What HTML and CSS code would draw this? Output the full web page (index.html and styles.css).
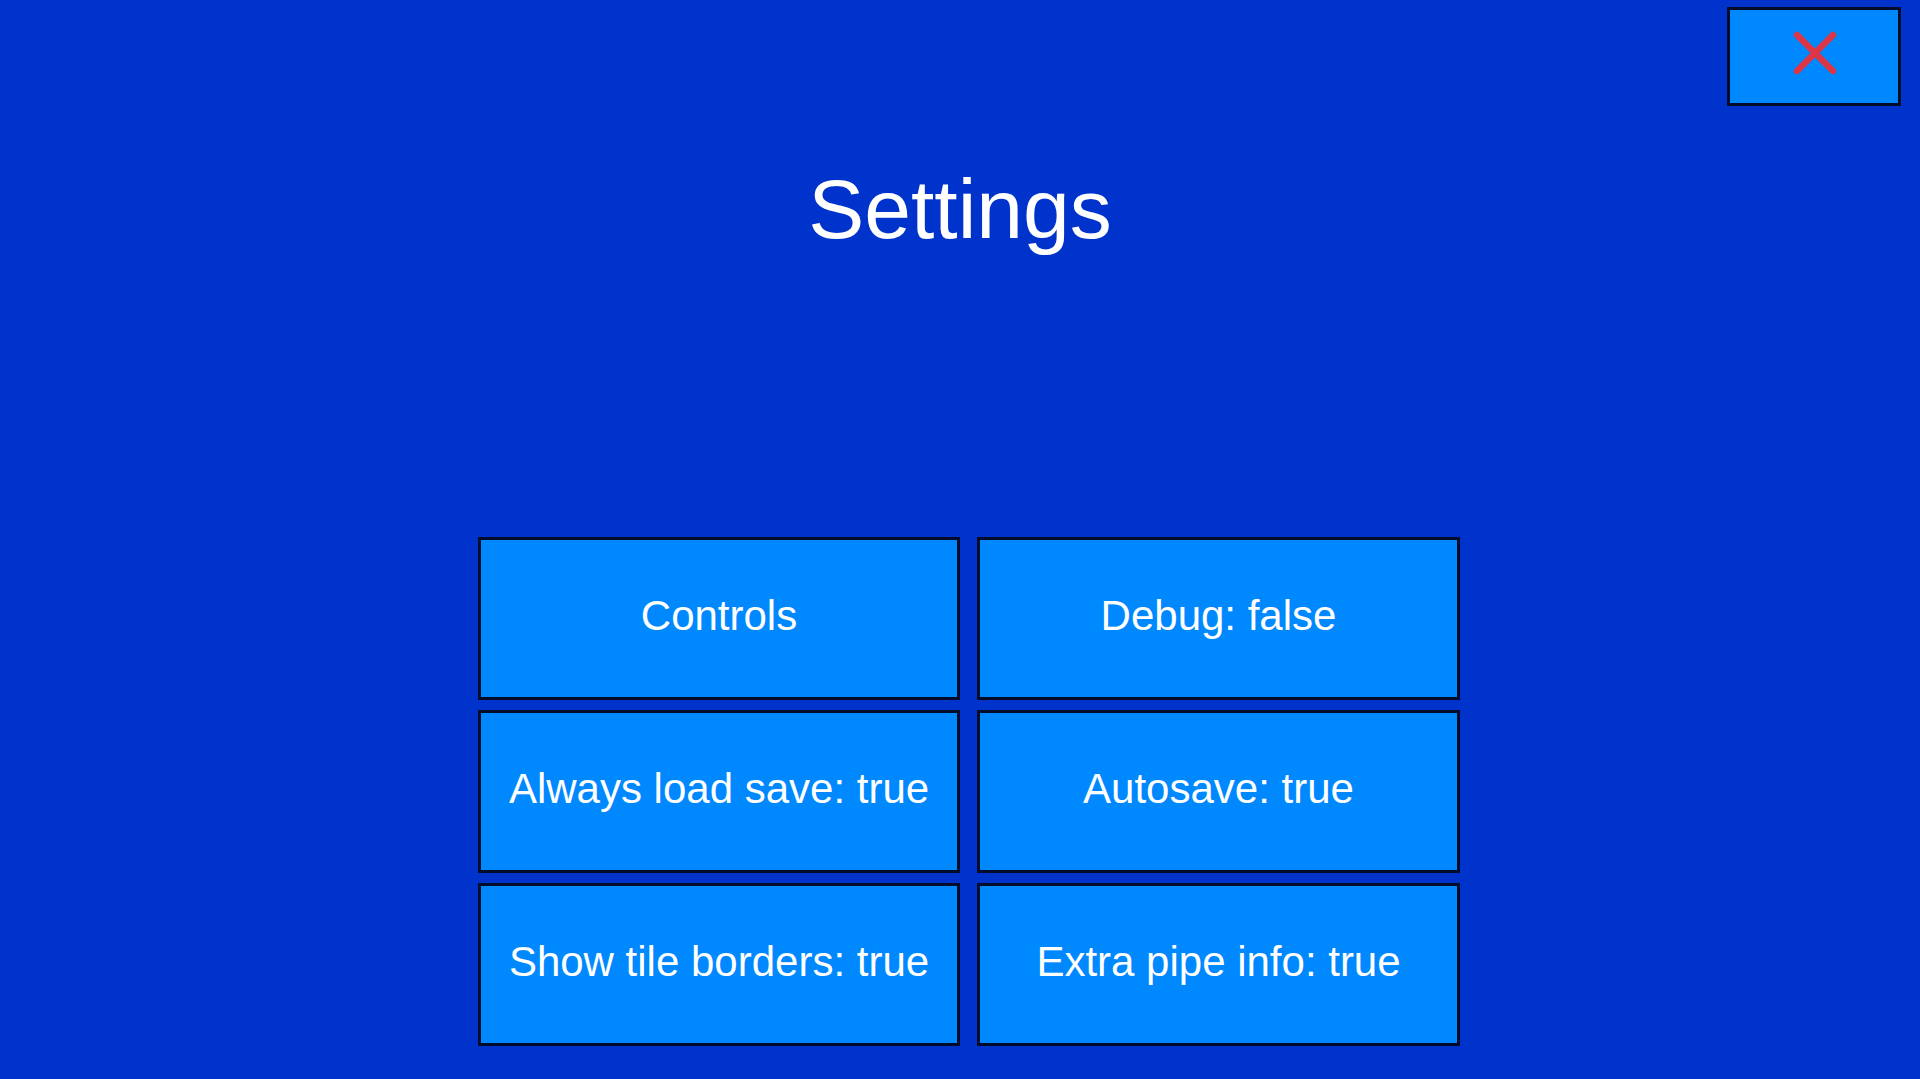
FILE: index.html
```html
<!DOCTYPE html>
<html lang="en">
<head>
<meta charset="utf-8">
<title>Settings</title>
<link rel="stylesheet" href="styles.css">
</head>
<body>
<div class="screen">
  <button class="close-btn" aria-label="Close">
    <svg width="46" height="46" viewBox="0 0 46 46">
      <path d="M5 5 L41 41 M41 5 L5 41" stroke="#dc3545" stroke-width="6.5" stroke-linecap="round" fill="none"/>
    </svg>
  </button>
  <h1 class="title">Settings</h1>
  <div class="options">
    <button class="opt">Controls</button>
    <button class="opt">Debug: false</button>
    <button class="opt">Always load save: true</button>
    <button class="opt">Autosave: true</button>
    <button class="opt">Show tile borders: true</button>
    <button class="opt">Extra pipe info: true</button>
  </div>
</div>
</body>
</html>
```

FILE: styles.css
```css
html, body {
  margin: 0;
  padding: 0;
  width: 100%;
  height: 100%;
  overflow: hidden;
}
body {
  background: #0033cc;
  font-family: "Liberation Sans", Arial, sans-serif;
  color: #ffffff;
}
.screen {
  position: relative;
  width: 1920px;
  height: 1079px;
}
.close-btn {
  position: absolute;
  top: 7px;
  right: 19px;
  width: 174px;
  height: 99px;
  box-sizing: border-box;
  background: #0088ff;
  border: 3px solid #000c2a;
  padding: 0 0 8px 2px;
  display: flex;
  align-items: center;
  justify-content: center;
  cursor: pointer;
}
.close-btn svg {
  display: block;
}
.title {
  margin: 0;
  padding-top: 167px;
  font-size: 84px;
  line-height: 84px;
  font-weight: normal;
  text-align: center;
}
.options {
  margin-top: 286px;
  margin-left: 478px;
  display: grid;
  grid-template-columns: 482px 483px;
  grid-auto-rows: 163px;
  column-gap: 17px;
  row-gap: 10px;
}
.opt {
  box-sizing: border-box;
  background: #0088ff;
  border: 3px solid #000c2a;
  color: #ffffff;
  font-family: "Liberation Sans", Arial, sans-serif;
  font-size: 42px;
  display: flex;
  align-items: center;
  justify-content: center;
  padding: 0 0 5px 0;
  cursor: pointer;
}
```
